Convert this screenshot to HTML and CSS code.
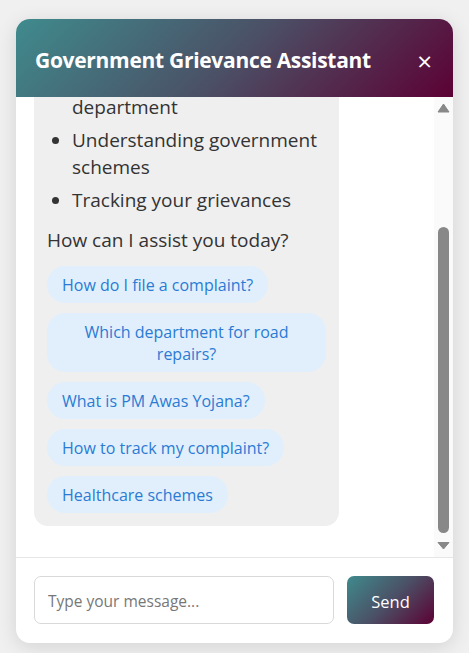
FILE: index.html
```
<!DOCTYPE html>
<html lang="en">
<head>
<meta charset="utf-8">
<title>Government Grievance Assistant</title>
<link rel="stylesheet" href="styles.css">
</head>
<body>
<div class="chat-window">
  <header class="chat-header">
    <h1 class="chat-title">Government Grievance Assistant</h1>
    <button class="close-btn" aria-label="Close">&times;</button>
  </header>
  <div class="chat-body">
    <div class="chat-messages">
      <div class="messages-inner">
        <div class="bubble bot">
          <p class="intro">Hello! I'm your Government Grievance Assistant. I can help you with:</p>
          <ul class="help-list">
            <li>Filing complaints</li>
            <li>Finding the relevant department</li>
            <li>Understanding government schemes</li>
            <li>Tracking your grievances</li>
          </ul>
          <p class="ask">How can I assist you today?</p>
          <div class="chips">
            <button class="chip">How do I file a complaint?</button>
            <button class="chip">Which department for road repairs?</button>
            <button class="chip">What is PM Awas Yojana?</button>
            <button class="chip">How to track my complaint?</button>
            <button class="chip">Healthcare schemes</button>
          </div>
        </div>
      </div>
    </div>
    <div class="scrollbar" aria-hidden="true">
      <svg class="sb-arrow sb-up" width="19" height="16" viewBox="0 0 19 16"><polygon points="4,15 15,15 9.5,7" fill="#888" stroke="#888" stroke-width="1" stroke-linejoin="round"/></svg>
      <div class="sb-track"><div class="sb-thumb"></div></div>
      <svg class="sb-arrow sb-down" width="19" height="16" viewBox="0 0 19 16"><polygon points="4,1.5 15,1.5 9.5,8" fill="#888" stroke="#888" stroke-width="1" stroke-linejoin="round"/></svg>
    </div>
  </div>
  <form class="chat-input" onsubmit="return false">
    <input class="msg-input" type="text" placeholder="Type your message...">
    <button class="send-btn" type="button">Send</button>
  </form>
</div>
</body>
</html>
```
FILE: styles.css
```
* { box-sizing: border-box; }
html, body { height: 100%; }
body {
  margin: 0;
  padding: 19px 16px 10px;
  background: #f0f0f0;
  font-family: "Open Sans", "Noto Sans", sans-serif;
  color: #333;
}
.chat-window {
  height: 624px;
  background: #fff;
  border-radius: 14px;
  box-shadow: 0 4px 20px rgba(0,0,0,0.12);
  display: flex;
  flex-direction: column;
  overflow: hidden;
}
.chat-header {
  height: 78px;
  flex: none;
  display: flex;
  align-items: center;
  justify-content: space-between;
  padding: 3px 21px 0 19px;
  background: linear-gradient(135deg, #3f8b8d 0%, #4b5066 50%, #5c0134 100%);
  color: #fff;
}
.chat-title {
  margin: 0;
  font-size: 21px;
  font-weight: 700;
  letter-spacing: -0.3px;
}
.close-btn {
  background: none;
  border: none;
  color: #fff;
  font-size: 26px;
  line-height: 1;
  padding: 0;
  margin-top: 3px;
  font-family: "Open Sans", sans-serif;
  cursor: pointer;
}
.chat-body {
  flex: 1;
  min-height: 0;
  display: flex;
}
.chat-messages {
  flex: 1;
  min-width: 0;
  overflow: hidden;
  display: flex;
  flex-direction: column-reverse;
  background: #fff;
}
.scrollbar {
  flex: none;
  width: 19px;
  background: #fafafa;
  display: flex;
  flex-direction: column;
}
.sb-arrow {
  display: block;
  flex: none;
}
.sb-track {
  flex: 1;
  display: flex;
  flex-direction: column;
  justify-content: flex-end;
}
.sb-thumb {
  height: 306px;
  margin: 0 4px 8px;
  background: #888;
  border-radius: 6px;
}
.messages-inner {
  padding: 18px 18px 31px;
}
.bubble {
  max-width: 305px;
  background: #efefef;
  border-radius: 14px;
  padding: 12px 13px 13px;
  font-size: 19px;
  line-height: 27px;
}
.intro { margin: 0 0 10px; }
.help-list {
  margin: 0 0 13px;
  padding-left: 25px;
}
.help-list li { margin-bottom: 6px; }
.help-list li:last-child { margin-bottom: 0; }
.ask { margin: 0; }
.chips {
  margin-top: 12px;
  display: flex;
  flex-direction: column;
  align-items: flex-start;
  gap: 10px;
}
.chip {
  background: #e1effc;
  color: #2b7bd4;
  border: none;
  border-radius: 18px;
  padding: 7.5px 15px;
  font-family: "Open Sans", sans-serif;
  font-size: 16px;
  line-height: 22px;
  text-align: center;
  cursor: pointer;
}
.chat-input {
  flex: none;
  margin: 0;
  border-top: 1px solid #e6e6e6;
  padding: 18px 19px 19px 18px;
  display: flex;
  gap: 13px;
}
.msg-input {
  flex: 1;
  height: 48px;
  border: 1px solid #d9d9d9;
  border-radius: 7px;
  padding: 2px 13px 0;
  font-family: "Open Sans", sans-serif;
  font-size: 15.5px;
  color: #333;
  outline: none;
}
.msg-input::placeholder { color: #777; }
.send-btn {
  width: 87px;
  height: 48px;
  border: none;
  border-radius: 7px;
  padding: 2px 0 0;
  background: linear-gradient(135deg, #3f8b8d 0%, #4b5066 50%, #5c0134 100%);
  color: #fff;
  font-family: "Open Sans", sans-serif;
  font-size: 16.5px;
  cursor: pointer;
}
```
